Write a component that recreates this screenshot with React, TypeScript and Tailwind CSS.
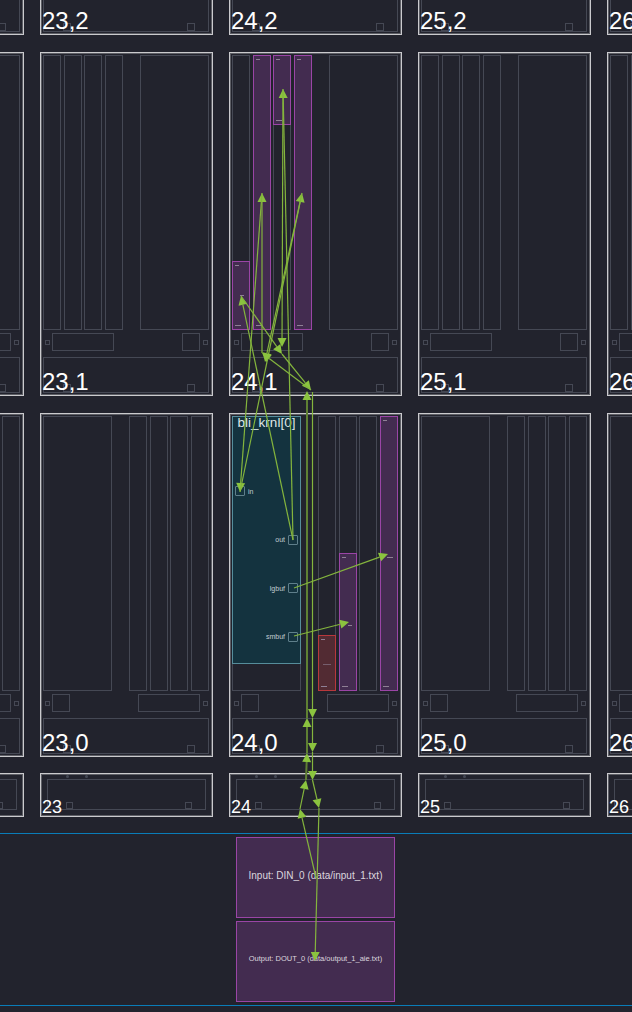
const TILE = "w-[173px] shrink-0 border border-[#cacacd] shadow-[inset_0_0_0_1px_#5d5e65] bg-[#22232d] relative";
const CELL = "border border-[#454854] relative";
const LABEL = "absolute left-[1px] text-white leading-none whitespace-nowrap";
const SMALL = "border border-[#454854]";

function Dash({ className }: { className: string }) {
  return <div className={"h-px bg-[#8f8095] " + className} />;
}

function Block({
  color,
  h,
  top = false,
  mid,
}: {
  color: "purple" | "red";
  h?: string;
  top?: boolean;
  mid?: string;
}) {
  const c = color === "purple" ? "bg-[#432c50] border-[#9a45a6]" : "bg-[#522b33] border-[#b8383c]";
  return (
    <div
      className={
        "absolute left-[-1px] right-[-1px] flex flex-col pt-[3px] pb-[3px] border " +
        c +
        " " +
        (top ? "top-[-1px] " : "bottom-[-1px] ") +
        (h ?? "top-[-1px]")
      }
    >
      <Dash className="ml-[2px] w-[4px]" />
      {mid && <Dash className={mid} />}
      <Dash className="mt-auto ml-[2px] w-[6px]" />
    </div>
  );
}

function Column({ children }: { children?: React.ReactNode }) {
  return <div className={CELL + " w-[18px] h-full"}>{children}</div>;
}

function MidRow({ flip }: { flip: boolean }) {
  const sq = <div className={"w-[18px] h-[18px] " + SMALL} />;
  const rect = <div className={"w-[62px] h-[18px] " + SMALL} />;
  return (
    <div className="flex items-center justify-between h-[18px] mt-[3px] pl-[2px] pr-[1px]">
      <div className={"w-[5px] h-[5px] " + SMALL} />
      <div className="flex-1 flex justify-between ml-[2px] mr-[3px]">
        {flip ? sq : rect}
        {flip ? rect : sq}
      </div>
      <div className={"w-[5px] h-[5px] " + SMALL} />
    </div>
  );
}

function Bottom() {
  return (
    <div className={CELL + " h-[36px] mt-[6px] flex items-end justify-between pl-[19px] pr-[13px]"}>
      <div className={"w-[8px] h-[8px] " + SMALL} />
      <div className={"w-[8px] h-[8px] " + SMALL} />
    </div>
  );
}

function Port({ name, left = false }: { name: string; left?: boolean }) {
  const box = <div className="w-[10px] h-[10px] rounded-[1px] border border-[#5f7f8b]" />;
  const text = <span className="text-[7px] leading-none text-[#c3cdd1]">{name}</span>;
  return (
    <div className={"flex items-center gap-[3px] h-[10px] " + (left ? "self-start" : "self-end")}>
      {left ? box : text}
      {left ? text : box}
    </div>
  );
}

function Kernel() {
  return (
    <div className="absolute left-[-1px] right-[-1px] top-[-1px] h-[248px] bg-[#14333f] border border-[#568d9b] flex flex-col px-[2px]">
      <div className="text-center text-[13.5px] h-[14px] leading-[12px] text-[#dfe6e8] whitespace-nowrap">bli_krnl[0]</div>
      <div className="flex flex-col gap-[38.6px] mt-[55px]">
        <Port name="in" left />
        <Port name="out" />
        <Port name="lgbuf" />
        <Port name="smbuf" />
      </div>
    </div>
  );
}

function Tile({ col, row }: { col: number; row: number }) {
  const flip = row === 0;
  const active = col === 24;
  const big = <div className={CELL + " w-[69px] h-full"}>{active && flip && <Kernel />}</div>;
  const cols = [0, 1, 2, 3].map((i) => {
    let inner = null;
    if (active && row === 1) {
      if (i === 0) inner = <Block color="purple" h="h-[69px]" mid="mt-[29px] ml-[7px] w-[4px]" />;
      if (i === 1 || i === 3) inner = <Block color="purple" />;
      if (i === 2) inner = <Block color="purple" top h="h-[70px]" />;
    }
    if (active && row === 0) {
      if (i === 0) inner = <Block color="red" h="h-[56px]" mid="mt-[24px] ml-[4px] w-[8px] opacity-60" />;
      if (i === 1) inner = <Block color="purple" h="h-[138px]" mid="mt-[67px] ml-[8px] w-[4px]" />;
      if (i === 3) inner = <Block color="purple" mid="mt-[136px] ml-[6px] w-[6px]" />;
    }
    return <Column key={i}>{inner}</Column>;
  });
  const group = <div className="flex gap-[2.67px] h-full">{cols}</div>;
  return (
    <div className={TILE + " h-[344px] pl-[2px] pr-[3px] pt-[2px]"}>
      <div className="flex h-[275px] justify-between">
        {flip ? big : group}
        {flip ? group : big}
      </div>
      <MidRow flip={flip} />
      <Bottom />
      <span className={LABEL + " text-[24px] bottom-[1px]"}>{`${col},${row}`}</span>
    </div>
  );
}

function Shim({ col }: { col: number }) {
  return (
    <div className={TILE + " h-[44px]"}>
      <div className="flex items-center gap-[16px] h-[5px] ml-[25px]">
        <div className="w-[3px] h-[3px] rounded-full bg-[#454854]" />
        <div className="w-[3px] h-[3px] rounded-full bg-[#454854]" />
      </div>
      <div className={CELL + " mx-[6px] h-[31px] flex items-end justify-between pl-[18px] pr-[13px]"}>
        <div className={"w-[7px] h-[7px] " + SMALL} />
        <div className={"w-[7px] h-[7px] " + SMALL} />
      </div>
      <span className={LABEL + " text-[18px] bottom-0"}>{col}</span>
    </div>
  );
}

const COLS = [22, 23, 24, 25, 26];

function Row({ row }: { row: number }) {
  return (
    <div className="flex gap-[16px] ml-[-149px]">
      {COLS.map((c) => (
        <Tile key={c} col={c} row={row} />
      ))}
    </div>
  );
}

type A = [number, number, number, number, number?, string?];
const THICK = "#5f8033";
const ARROWS: A[] = [
  [293, 540, 283, 89],
  [283, 89, 282, 347],
  [293, 540, 241, 296],
  [241, 296, 282, 354],
  [282, 354, 311, 390],
  [311, 390, 262, 353],
  [262, 353, 262, 193],
  [262, 193, 240, 492],
  [240, 492, 302, 193],
  [302, 193, 265, 362],
  [307, 753, 307, 718, 2, THICK],
  [307, 718, 307, 391, 2, THICK],
  [306, 780, 307, 753, 2, THICK],
  [300, 809, 306, 780],
  [316, 878, 300, 809],
  [312.5, 392, 312.5, 718],
  [312.5, 718, 312.5, 752],
  [312.5, 752, 312.5, 780],
  [312.5, 780, 319, 808],
  [319, 808, 315, 961],
  [294, 588, 388, 554],
  [294, 636, 349, 622],
];

function Arrows() {
  return (
    <svg className="absolute left-0 top-0 pointer-events-none" width="632" height="1012">
      {ARROWS.map(([x1, y1, x2, y2, w = 1.2, c = "#84b53d"], i) => {
        const d = Math.hypot(x2 - x1, y2 - y1);
        const ux = (x2 - x1) / d;
        const uy = (y2 - y1) / d;
        const bx = x2 - ux * 9;
        const by = y2 - uy * 9;
        const pts = `${x2},${y2} ${bx - uy * 4.5},${by + ux * 4.5} ${bx + uy * 4.5},${by - ux * 4.5}`;
        return (
          <g key={i}>
            <line x1={x1} y1={y1} x2={bx} y2={by} stroke={c} strokeWidth={w} />
            <polygon points={pts} fill="#8bc33f" />
          </g>
        );
      })}
    </svg>
  );
}

export default function App() {
  return (
    <div className="relative w-[632px] h-[1012px] overflow-hidden bg-[#22232d] font-['Liberation_Sans',Arial,sans-serif]">
      <div className="mt-[-309px] flex flex-col gap-[17px]">
        <Row row={2} />
        <Row row={1} />
        <Row row={0} />
        <div className="flex gap-[16px] ml-[-149px] mt-[-1px]">
          {COLS.map((c) => (
            <Shim key={c} col={c} />
          ))}
        </div>
        <div className="mt-[-1px] flex flex-col">
          <div className="h-px bg-[#0a7cb8]" />
          <div className="flex flex-col gap-[3px] pt-[3px] h-[171px]">
            <div className="ml-[236px] w-[159px] h-[81px] pb-[5px] flex items-center justify-center bg-[#432c50] border border-[#9a45a6] text-[10px] text-[#dcd6df] whitespace-nowrap">
              Input: DIN_0 (data/input_1.txt)
            </div>
            <div className="ml-[236px] w-[159px] h-[81px] pb-[5px] flex items-center justify-center bg-[#432c50] border border-[#9a45a6] text-[7.5px] text-[#dcd6df] whitespace-nowrap">
              Output: DOUT_0 (data/output_1_aie.txt)
            </div>
          </div>
          <div className="h-px bg-[#0a7cb8]" />
        </div>
      </div>
      <Arrows />
    </div>
  );
}
